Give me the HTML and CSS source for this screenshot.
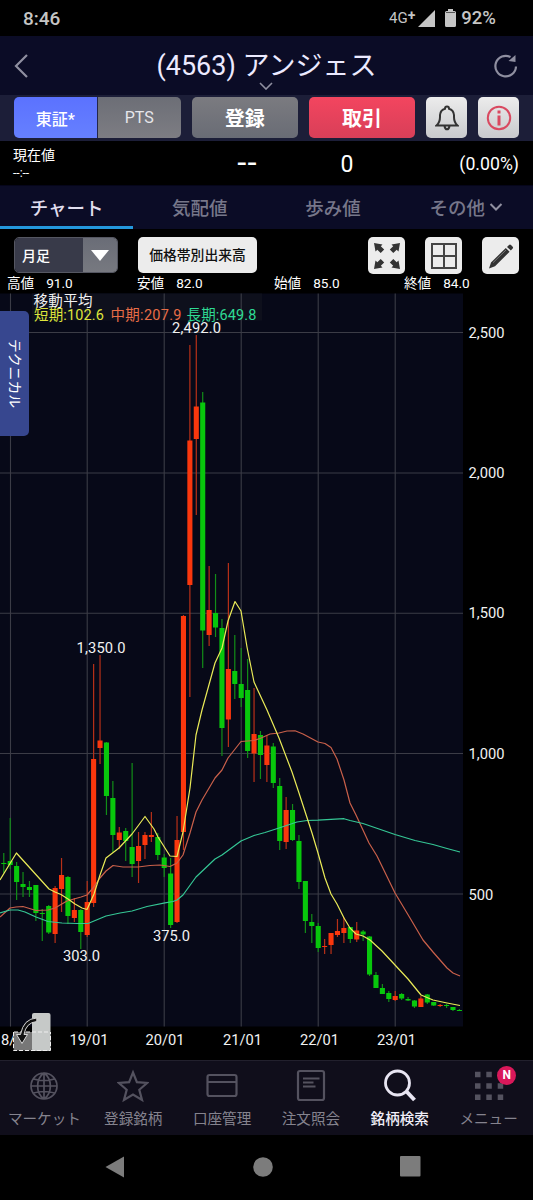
FILE: index.html
```html
<!DOCTYPE html>
<html lang="ja">
<head>
<meta charset="utf-8">
<title>(4563) アンジェス</title>
<link rel="stylesheet" href="styles.css">
</head>
<body>
<div class="screen">
  <div class="status">
    <span class="clock">8:46</span>
    <span class="net">4G<sup>+</sup></span>
    <svg class="signal" width="17" height="17" viewBox="0 0 17 17"><path d="M17 0V17H0Z"/></svg>
    <svg class="battery" width="11" height="18" viewBox="0 0 11 18"><path d="M3 0H8V2H9.5Q11 2 11 3.500V16.500Q11 18 9.500 18H1.500Q0 18 0 16.500V3.500Q0 2 1.500 2H3Z"/><path d="M1 3.500H10" stroke="#555" stroke-width="1"/></svg>
    <span class="level">92%</span>
  </div>

  <header class="header">
    <svg class="back" width="14" height="24" viewBox="0 0 14 24"><path d="M13 1L2 12L13 23"/></svg>
    <h1 class="title">(4563) アンジェス</h1>
    <svg class="reload" width="24" height="24" viewBox="0 0 24 24"><path class="ring" d="M22 12.500A10.300 10.300 0 1 1 16.500 3"/><path class="head" d="M14.500 7L21.500 1V8Z"/></svg>
    <svg class="chev" width="14" height="8" viewBox="0 0 14 8"><path d="M1 1L7 7L13 1"/></svg>
  </header>

  <div class="actions">
    <div class="seg"><span class="seg-on">東証*</span><span class="seg-off">PTS</span></div>
    <span class="btn grey">登録</span>
    <span class="btn red">取引</span>
    <span class="sq"><svg width="24" height="26" viewBox="0 0 24 26"><path class="bell" d="M1.500 20.500Q5 17.500 5 12V10Q5.500 5 10 3.800Q10 1.500 12 1.500T14 3.800Q18.500 5 19 10V12Q19 17.500 22.500 20.500ZM9.500 21Q10 24.300 12 24.300T14.500 21"/></svg></span>
    <span class="sq"><svg width="26" height="26" viewBox="0 0 26 26"><circle class="info" cx="13" cy="13" r="11.200"/><path class="info-i" d="M13 5.500V8.500M13 10.500V20.500"/></svg></span>
  </div>

  <div class="price">
    <div class="now"><span>現在値</span><span class="time">--:--</span></div>
    <span class="last">--</span>
    <span class="diff">0</span>
    <span class="pct">(0.00%)</span>
  </div>

  <nav class="tabs">
    <span class="tab on">チャート</span>
    <span class="tab">気配値</span>
    <span class="tab">歩み値</span>
    <span class="tab">その他<svg width="14" height="10" viewBox="0 0 14 10"><path d="M1.500 2L7 7.500L12.500 2"/></svg></span>
  </nav>

  <div class="tools">
    <div class="select"><span class="sel-text">月足</span><span class="sel-arrow"><svg width="18" height="11" viewBox="0 0 18 11"><path d="M0 0H18L9 11Z"/></svg></span></div>
    <span class="volume">価格帯別出来高</span>
    <span class="tool"><svg width="28" height="28" viewBox="0 0 28 28"><g id="a"><path d="M1 1L9.500 2.500L7.800 4.300L11.200 7.500L7.700 11L4.300 7.800L2.500 9.500Z"/></g><use href="#a" transform="matrix(-1 0 0 1 28 0)"/><use href="#a" transform="matrix(1 0 0 -1 0 28)"/><use href="#a" transform="matrix(-1 0 0 -1 28 28)"/></svg></span>
    <span class="tool"><svg width="28" height="28" viewBox="0 0 28 28"><path class="gridicon" d="M2 2H26V26H2ZM14 2V26M2 14H26"/></svg></span>
    <span class="tool"><svg width="28" height="28" viewBox="0 0 28 28"><path d="M2 26.500L4 20.500L18.800 6L22.600 9.700L8 24.300ZM20 4.900L22 3Q23 2 24 3L25.700 4.700Q26.500 5.500 25.700 6.500L23.800 8.500Z"/><path class="shine" d="M6 20.700L19 8"/></svg></span>
  </div>

  <div class="ohlc">
    <span>高値<b>91.0</b></span><span>安値<b>82.0</b></span><span>始値<b>85.0</b></span><span>終値<b>84.0</b></span>
  </div>

  <div class="chart">
    <svg width="533" height="767" viewBox="0 293 533 767">
      <rect class="plot" x="0" y="293.500" width="463" height="733"/>
      <rect class="legend-bg" x="32" y="293.500" width="230" height="27"/>
      <path class="grid" d="M10.500 293.500V1026.500M87.200 293.500V1026.500M164.200 293.500V1026.500M241.200 293.500V1026.500M318.200 293.500V1026.500M395.200 293.500V1026.500M0 332.500H463M0 473H463M0 613.200H463M0 753.500H463M0 894H463"/>
      <path class="wick up" id="upWick"/><path class="wick down" id="downWick"/>
      <path class="body up" id="upBody"/><path class="body down" id="downBody"/>
      <polyline class="ma mid" points="0,917 10,908 16,907 23,906.500 36,910.500 48,910 55,908 67,901 81,897 87,895 93,888 100,878 106,871 113,865.500 123,867 138,867 150,865.500 160,865 170,866.500 177,863 183,855 190,833 196,812 202,800 215,778 222,770 228,758 241,741.500 254,740.500 260,738.500 270,734 279,733 287,731 295,730.800 303,734 318,742 325,743.500 331,747.500 337,759 344,780 350,803 356,815 369,843 377,856 395,893 410,918 423,940 433,952 447,968 453,973 460,976"/>
      <polyline class="ma long" points="0,913 10,910 18,910 25,912 36,917 48,921.500 62,923 77,923.500 88,923.500 106,916 120,913 132,911 147,906.500 165,902.800 173,901.500 177,900 183,895 196,877 215,859 222,855 241,841 254,835.500 265,832.500 279,828 297,822 307,820.500 318,820.200 344,818.700 350,820.500 363,823.500 395,834.500 415,840.500 433,844.500 447,848.500 460,852"/>
      <polyline class="ma short" points="0,880 16.400,853 49,889 55,892 61,894.500 68,899 75,904 82,908 87,909.500 94,894 100,875 106,858 119,848 132,834 138,826 145,816.500 154,829 158,837 170,856 177,856.500 183,832 190,788 196,735 202,710 215,663 222,648 228,621 235,601.500 241,611 247,647 254,682 267,710 279,738 292,772 299,793 312,833 318,853 325,878 331,894 337,904 344,918 350,928 356,934 363,936 370,940 382,951 395,965 408,979 421,995 433,1000 447,1003 460,1005.500"/>
      <g class="note">
        <text x="196.500" y="332.500" textLength="49">2,492.0</text>
        <text x="101" y="653" textLength="49">1,350.0</text>
        <text x="81.500" y="960.500" textLength="37">303.0</text>
        <text x="171.500" y="940.500" textLength="37">375.0</text>
      </g>
      <g class="yaxis">
        <text x="468.500" y="337.500">2,500</text><text x="468.500" y="478">2,000</text><text x="468.500" y="618">1,500</text><text x="468.500" y="758.500">1,000</text><text x="468.500" y="899.500">500</text>
      </g>
      <g class="note">
        <text class="first" x="1" y="1045">8/01</text>
        <text x="89" y="1045">19/01</text><text x="165" y="1045">20/01</text><text x="242.500" y="1045">21/01</text><text x="319.500" y="1045">22/01</text><text x="396.500" y="1045">23/01</text>
      </g>
      <g class="legend">
        <text class="l-title" x="33.500" y="305.500" textLength="59">移動平均</text>
        <text class="l-short" x="34" y="319.500" textLength="70">短期:102.6</text>
        <text class="l-mid" x="110.500" y="319.500" textLength="71">中期:207.9</text>
        <text class="l-long" x="186.500" y="319.500" textLength="70">長期:649.8</text>
      </g>
      <g class="rotate">
        <rect class="r-land" x="13.500" y="1032" width="37" height="18.500" rx="1.500"/>
        <rect class="r-port" x="32" y="1013" width="18.500" height="38" rx="2"/>
        <path class="r-dash" d="M14 1032H50M13.500 1032V1050.500H50.500V1032"/>
        <path class="r-arrow" d="M36.800 1018Q23.500 1018.500 20.500 1034.500H16.500L22 1043.500L27.500 1034.500H24Q26 1022.500 36.800 1021.500Z"/>
      </g>
    </svg>
    <div class="technical">テクニカル</div>
  </div>

  <nav class="bottom">
    <span class="item"><svg width="32" height="34" viewBox="0 0 32 34"><path class="thin" d="M16 4A13 13 0 1 0 16 30A13 13 0 1 0 16 4V30M16 4C7.500 10 7.500 24 16 30M16 4C24.500 10 24.500 24 16 30M3 17H29M5.500 10Q16 13 26.500 10M5.500 24Q16 21 26.500 24"/></svg>マーケット</span>
    <span class="item"><svg width="32" height="34" viewBox="0 0 32 34"><path d="M16 3.500L19.900 13.200L30 14L22.300 20.800L25 31L16 25.500L7 31L9.700 20.800L2 14L12.100 13.200Z"/></svg>登録銘柄</span>
    <span class="item"><svg width="32" height="34" viewBox="0 0 32 34"><path d="M3.500 6H28.500Q30.500 6 30.500 8V25Q30.500 27 28.500 27H3.500Q1.500 27 1.500 25V8Q1.500 6 3.500 6ZM2 13H30"/></svg>口座管理</span>
    <span class="item"><svg width="32" height="34" viewBox="0 0 32 34"><path d="M5 2H27Q29 2 29 4V29Q29 31 27 31H5Q3 31 3 29V4Q3 2 5 2ZM8 9.500H24.500M8 13.500H18.500M8 17.500H20.500"/></svg>注文照会</span>
    <span class="item active"><svg width="32" height="34" viewBox="0 0 32 34"><circle cx="13.500" cy="14" r="12"/><path class="handle" d="M22.500 22.500L30.500 31"/></svg>銘柄検索</span>
    <span class="item"><svg width="32" height="34" viewBox="0 0 32 34"><path class="dots" d="M2 5.500h5.500M13.300 5.500h5.500M24.700 5.500h5.500M2 17h5.500M13.300 17h5.500M24.700 17h5.500M2 28.300h5.500M13.300 28.300h5.500M24.700 28.300h5.500"/></svg>メニュー<b class="badge">N</b></span>
  </nav>

  <div class="sys">
    <svg width="20" height="22" viewBox="0 0 20 22"><path d="M19 0.500V21.500L0.500 11Z"/></svg>
    <svg width="20" height="20" viewBox="0 0 20 20"><circle cx="10" cy="10" r="9.800"/></svg>
    <svg width="21" height="21" viewBox="0 0 21 21"><rect width="20.500" height="20.500" rx="1"/></svg>
  </div>
</div>
<script src="chart.js"></script>
</body>
</html>
```
FILE: chart.js
```js
// Monthly candles from 2017/12: [direction, wick top, wick bottom, body top, body bottom]
const candles = [
  ['d', 853, 873, 863, 864], ['d', 818, 869, 861, 865], ['d', 862, 900, 866, 882],
  ['d', 872, 897, 884, 887], ['d', 881, 897, 887, 890], ['d', 885, 921, 885, 913],
  ['d', 909, 941, 913, 914], ['d', 905, 934, 906, 932.5], ['u', 886, 943, 888, 934],
  ['u', 858, 912, 875, 889], ['d', 876, 924, 877, 916], ['u', 898, 922, 910, 918],
  ['d', 909, 949, 910, 932], ['u', 881, 937, 902, 935], ['u', 664, 907, 759, 903],
  ['u', 655, 764, 740.5, 748], ['d', 742, 815, 742.5, 796], ['d', 781, 852, 798, 835],
  ['u', 827, 849, 832.5, 840], ['d', 828, 861, 831, 841], ['d', 763, 877, 847, 864],
  ['u', 832, 883, 846, 861], ['u', 832, 859, 835, 845], ['u', 812, 842, 835, 837],
  ['d', 833, 860, 837, 855], ['d', 854, 877, 857.5, 868], ['d', 858, 928, 873.5, 925],
  ['u', 816, 923, 840, 922], ['u', 615, 850, 616, 832], ['u', 345, 697, 440.5, 585],
  ['u', 335, 515, 406.5, 439], ['d', 392, 668, 402.5, 630.5], ['u', 566, 646, 610, 635],
  ['d', 574, 637, 613, 627.5], ['d', 619, 756, 628, 728], ['u', 563, 747, 669, 719.5],
  ['d', 635, 699, 671, 684], ['d', 648, 707, 684, 698], ['d', 659, 758, 690, 751],
  ['u', 688, 782, 734, 753.5], ['d', 731, 779, 735, 755], ['u', 735, 782, 745.5, 765],
  ['d', 743, 788, 746.5, 783], ['d', 778, 850, 786, 841], ['u', 797, 849, 810, 842],
  ['d', 804, 841, 810, 840], ['d', 835, 889, 841, 882], ['d', 881, 933, 881, 921],
  ['d', 914, 943, 922, 926], ['d', 923, 952, 926, 948], ['u', 939, 954, 946, 947],
  ['u', 933, 954, 933, 945], ['u', 919, 937, 931, 935], ['u', 917, 943, 928, 933],
  ['d', 927, 943, 927, 939], ['u', 922, 942, 930.5, 939.5], ['d', 930, 941, 931.5, 934.5],
  ['d', 936, 976, 936.5, 974.5], ['d', 972, 988, 975, 988], ['d', 984, 994, 988, 994],
  ['d', 991, 1002, 993, 999], ['u', 991, 1001, 996, 1000], ['d', 993, 1000, 994, 998.5],
  ['d', 997, 1001, 999, 1000.5], ['d', 1000, 1008, 1000.5, 1006.5], ['u', 996, 1007, 998.5, 1007],
  ['d', 994, 1004, 994.5, 1002.5], ['d', 1002, 1006, 1002, 1005.5], ['u', 1004, 1007, 1005, 1006],
  ['d', 1004, 1008, 1005, 1006], ['d', 1007, 1011, 1007, 1010], ['d', 1009, 1011, 1010, 1011]
];
const paths = { uWick: '', uBody: '', dWick: '', dBody: '' };
candles.forEach(([dir, high, low, top, bottom], i) => {
  const x = (10.2 + (i - 1) * 6.417).toFixed(2);
  paths[dir + 'Wick'] += `M${x} ${high}V${low}`;
  paths[dir + 'Body'] += `M${x} ${top}V${bottom}`;
});
document.getElementById('upWick').setAttribute('d', paths.uWick);
document.getElementById('upBody').setAttribute('d', paths.uBody);
document.getElementById('downWick').setAttribute('d', paths.dWick);
document.getElementById('downBody').setAttribute('d', paths.dBody);
```
FILE: styles.css
```css
* { box-sizing: border-box; }
body { margin: 0; background: #000; color: #fff; font-family: Roboto, "Noto Sans CJK JP", sans-serif; }
svg { display: block; flex: none; }
.screen { width: 533px; height: 1200px; display: flex; flex-direction: column; overflow: hidden; white-space: nowrap; }

.status { height: 36px; display: flex; align-items: center; padding: 0 37px 0 23px; color: #c5c5c5; }
.clock { font-size: 19px; margin-right: auto; font-weight: 500; }
.net { font-size: 15px; line-height: 18px; margin-right: 3px; }
.net sup { font-size: 14px; font-weight: 700; line-height: 0; vertical-align: 3px; }
.signal { fill: #c5c5c5; margin-right: 10px; }
.battery { fill: #c5c5c5; margin-right: 5px; }
.level { font-size: 18.500px; font-weight: 500; }

.header { position: relative; height: 59px; display: flex; align-items: center; justify-content: space-between; padding: 0 15px 0 14px; background: #0b0c26; }
.title { margin: 0; padding-left: 11px; font-size: 27px; font-weight: 400; line-height: 40px; color: #eceaff; }
.header svg { fill: none; stroke: #8f8fa0; stroke-width: 2.200; }
.header .reload .head { fill: #8f8fa0; stroke: none; }
.header .chev { position: absolute; left: 259px; top: 46px; stroke-width: 1.600; }

.actions { height: 46px; display: flex; align-items: flex-start; padding: 2px 14px 0; background: #1c1e38; }
.seg { display: flex; width: 167px; height: 41px; border-radius: 5px; overflow: hidden; margin-right: 11px; }
.seg span { flex: 1; display: flex; align-items: center; justify-content: center; font-size: 16px; }
.seg .seg-on { background: linear-gradient(#5b72ff, #6680ff); font-weight: 500; border-right: 1px solid #23264a; }
.seg-off { background: linear-gradient(#6c6e76, #7d7d83); color: #e6e6ea; }
.btn { height: 41px; border-radius: 5px; display: flex; align-items: center; justify-content: center; font-size: 20px; font-weight: 700; width: 106.500px; }
.grey { background: linear-gradient(#7b7b80, #696c75); margin-right: 11px; }
.red { background: linear-gradient(#f3455f, #d83f58); margin-right: 11px; }
.sq { width: 41px; height: 41px; border-radius: 5px; background: linear-gradient(#ececec, #c9cacd); display: flex; align-items: center; justify-content: center; }
.sq + .sq { margin-left: 11px; }
.bell { fill: none; stroke: #333; stroke-width: 2; }
.info { fill: none; stroke: #d94960; stroke-width: 2; }
.info-i { stroke: #d94960; stroke-width: 3; }

.price { height: 44px; display: grid; grid-template-columns: 184px 100px 100px 1fr; align-items: center; padding: 0 14px 0 13px; }
.now { display: flex; flex-direction: column; font-size: 14px; line-height: 20px; }
.now .time { font-size: 12px; line-height: 17px; }
.last { text-align: center; font-size: 26px; font-weight: 500; transform: scaleX(1.15); }
.diff { font-size: 23px; text-align: center; padding-top: 2px; }
.pct { font-size: 17.700px; text-align: right; padding-top: 2px; }

.tabs { height: 44px; display: grid; grid-template-columns: repeat(4, 1fr); background: #0b0c26; border-top: 1px solid #05051a; }
.tab { display: flex; align-items: center; justify-content: center; font-size: 18.500px; color: #77778a; font-weight: 500; border-bottom: 3px solid transparent; padding-top: 2px; }
.tab.on { color: #e0deee; border-bottom-color: #2498dc; }
.tab svg { margin-left: 4px; fill: none; stroke: #9090a0; stroke-width: 2; }

.tools { height: 46px; display: flex; align-items: flex-start; padding: 8px 14px 0; }
.select { width: 104px; height: 36px; display: flex; border-radius: 5px; overflow: hidden; border: 1px solid #555762; margin-right: 20px; }
.sel-text { flex: 1; background: #383a49; font-size: 14px; font-weight: 500; line-height: 36px; padding-left: 7px; }
.sel-arrow { width: 34px; background: linear-gradient(#6a6d77, #777980); display: flex; align-items: center; justify-content: center; }
.sel-arrow svg { fill: #fff; }
.volume { width: 120px; height: 36px; border-radius: 5px; background: #ececec; color: #111; font-size: 13.800px; font-weight: 500; line-height: 37px; text-align: center; margin-right: 111px; }
.tool { width: 37px; height: 37px; border-radius: 5px; background: #ececec; display: flex; align-items: center; justify-content: center; fill: #333; }
.tool + .tool { margin-left: 20px; }
.gridicon { fill: none; stroke: #444; stroke-width: 2; }
.shine { stroke: #777; stroke-width: 1; }

.ohlc { height: 18px; display: grid; grid-template-columns: 130px 137px 130px 1fr; padding-left: 7px; font-size: 13.600px; line-height: 17px; }
.ohlc b { font-weight: 400; margin-left: 12px; }

.chart { position: relative; height: 767px; }
.plot { fill: #070918; }
.legend-bg { fill: #0e101c; }
.grid { stroke: #3b3c46; stroke-width: 1.100; fill: none; }
.wick { stroke-width: 1.200; fill: none; }
.body { stroke-width: 5.100; fill: none; }
.up { stroke: #fa370d; }
.down { stroke: #08c70c; }
.wick.up { stroke: #b83018; }
.wick.down { stroke: #128e18; }
.ma { fill: none; stroke-width: 1.200; stroke-linejoin: round; }
.short { stroke: #eaeb58; }
.mid { stroke: #c9604a; }
.long { stroke: #35c795; }
.chart text { font-size: 14.700px; fill: #f2f2f2; }
.note text { text-anchor: middle; }
.note .first { text-anchor: start; }
.chart .legend text { font-size: 14.500px; }
.chart .legend .l-short { fill: #dfe53b; }
.chart .legend .l-mid { fill: #e86d47; }
.chart .legend .l-long { fill: #2edb94; }
.r-land { fill: #777; }
.r-port { fill: #c6c9c8; }
.r-dash { fill: none; stroke: #eee; stroke-width: 1; stroke-dasharray: 4 2; }
.r-arrow { fill: #111; stroke: #d8d8d8; stroke-width: 1; }
.technical { position: absolute; left: 0; top: 18px; width: 28.500px; height: 125px; border-radius: 0 5px 5px 0; background: #37478f; writing-mode: vertical-rl; text-orientation: sideways; text-align: center; font-size: 13.800px; line-height: 28px; }

.bottom { height: 75px; display: grid; grid-template-columns: repeat(6, 1fr); background: #100e1b; border-top: 1px solid #22202d; }
.item { position: relative; display: flex; flex-direction: column; align-items: center; padding-top: 8px; font-size: 14.600px; line-height: 22px; color: #85838e; }
.item svg { margin-bottom: 5px; fill: none; stroke: #54525f; stroke-width: 2.200; }
.item .thin { stroke-width: 1.700; }
.item .dots { stroke-width: 5.500; }
.item.active { color: #f1eff8; font-weight: 500; }
.item.active svg { stroke: #e8e5f2; stroke-width: 2.800; }
.item.active .handle { stroke-width: 4; }
.badge { position: absolute; left: 53px; top: 5px; width: 19px; height: 19px; border-radius: 50%; background: #d9185a; color: #fff; font-size: 12px; line-height: 19px; text-align: center; }

.sys { height: 65px; display: flex; justify-content: space-between; align-items: center; padding: 0 112px 2px 105px; fill: #7c7c7c; }
```
